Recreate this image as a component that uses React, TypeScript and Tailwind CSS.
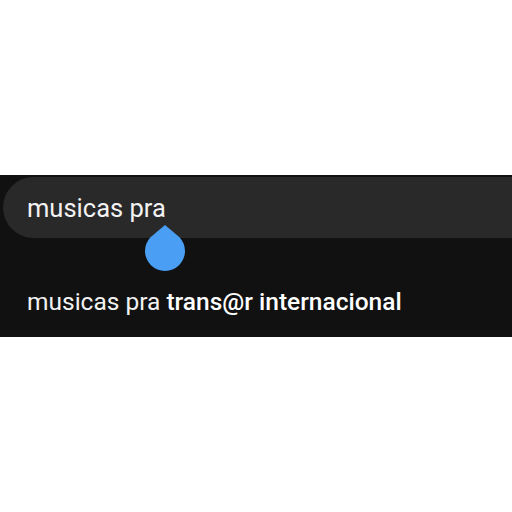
import React from 'react';

const Handle: React.FC = () => (
  <svg width="42" height="48" viewBox="0 0 42 48" className="absolute left-[144px] top-[50px]">
    <path d="M21 0 L35.5 12.2 A20 20 0 1 1 6.5 12.2 Z" fill="#4a9ff5" />
  </svg>
);

const App: React.FC = () => {
  return (
    <div className="w-[512px] h-[512px] bg-white flex flex-col" style={{ fontFamily: 'Roboto, "Noto Sans", sans-serif' }}>
      <div className="h-[175px]" />
      <div className="relative h-[162px] bg-[#111111] flex flex-col">
        <div className="mt-[2px] ml-[3px] h-[61px] bg-[#292929] rounded-l-[31px] flex items-center pl-[24px]">
          <span className="text-[25.5px] text-[#f2f2f2] leading-none mt-[2px]">musicas pra</span>
        </div>
        <Handle />
        <div className="pl-[27px] mt-[52px] text-[24.5px] leading-none text-[#f2f2f2]">
          musicas pra <span className="font-medium text-white">trans@r internacional</span>
        </div>
      </div>
    </div>
  );
};

export default App;
